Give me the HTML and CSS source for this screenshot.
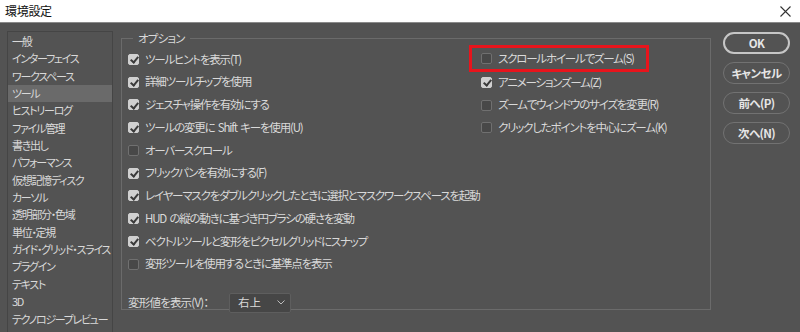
FILE: index.html
```html
<!DOCTYPE html>
<html lang="ja">
<head>
<meta charset="UTF-8">
<title>環境設定</title>
<link rel="stylesheet" href="styles.css">
</head>
<body>
<div class="titlebar">
  <span class="title">環境設定</span>
  <svg class="close" width="11" height="11" viewBox="0 0 11 11"><path d="M0.5 0.5L10.5 10.5M10.5 0.5L0.5 10.5" stroke="#333" stroke-width="1.1"/></svg>
</div>
<div class="dialog">
  <ul class="sidebar">
    <li>一般</li>
    <li>インターフェイス</li>
    <li>ワークスペース</li>
    <li class="active">ツール</li>
    <li>ヒストリーログ</li>
    <li>ファイル管理</li>
    <li>書き出し</li>
    <li>パフォーマンス</li>
    <li>仮想記憶ディスク</li>
    <li>カーソル</li>
    <li>透明部分・色域</li>
    <li>単位・定規</li>
    <li>ガイド・グリッド・スライス</li>
    <li>プラグイン</li>
    <li>テキスト</li>
    <li>3D</li>
    <li>テクノロジープレビュー</li>
  </ul>
  <fieldset class="options">
    <legend>オプション</legend>
    <div class="columns">
      <div class="col col-left">
        <label class="opt"><span class="box on"></span>ツールヒントを表示(T)</label>
        <label class="opt"><span class="box on"></span>詳細ツールチップを使用</label>
        <label class="opt"><span class="box on"></span>ジェスチャ操作を有効にする</label>
        <label class="opt"><span class="box on"></span>ツールの変更に Shift キーを使用(U)</label>
        <label class="opt"><span class="box"></span>オーバースクロール</label>
        <label class="opt"><span class="box on"></span>フリックパンを有効にする(F)</label>
        <label class="opt"><span class="box on"></span>レイヤーマスクをダブルクリックしたときに選択とマスクワークスペースを起動</label>
        <label class="opt"><span class="box on"></span>HUD の縦の動きに基づき円ブラシの硬さを変動</label>
        <label class="opt"><span class="box on"></span>ベクトルツールと変形をピクセルグリッドにスナップ</label>
        <label class="opt"><span class="box"></span>変形ツールを使用するときに基準点を表示</label>
      </div>
      <div class="col col-right">
        <label class="opt highlight"><span class="box"></span>スクロールホイールでズーム(S)</label>
        <label class="opt"><span class="box on"></span>アニメーションズーム(Z)</label>
        <label class="opt"><span class="box"></span>ズームでウィンドウのサイズを変更(R)</label>
        <label class="opt"><span class="box"></span>クリックしたポイントを中心にズーム(K)</label>
      </div>
    </div>
    <div class="transform-row">
      <span class="field-label">変形値を表示(V)：</span>
      <div class="select">
        <span>右上</span>
        <svg width="8" height="5" viewBox="0 0 8 5"><path d="M0.5 0.5L4 4L7.5 0.5" fill="none" stroke="#bdbdbd" stroke-width="1"/></svg>
      </div>
    </div>
  </fieldset>
  <div class="buttons">
    <button class="btn btn-default">OK</button>
    <button class="btn">キャンセル</button>
    <button class="btn">前へ(P)</button>
    <button class="btn">次へ(N)</button>
  </div>
</div>
</body>
</html>
```

FILE: styles.css
```css
*{margin:0;padding:0;box-sizing:border-box;}
:root{
  --bg:#535353;
  --text:#d9d9d9;
  --line:#6b6b6b;
  --dark-line:#454545;
  --select:#6a6a6a;
}
html,body{width:800px;height:332px;overflow:hidden;}
body{background:var(--bg);color:var(--text);font-family:"Noto Sans CJK JP","Noto Sans",sans-serif;font-size:11.5px;font-feature-settings:"palt";line-height:1;}
.titlebar{height:23px;background:#fff;border-bottom:1px solid #8a8a8a;display:flex;align-items:center;justify-content:space-between;padding:0 9px 0 5px;}
.title{color:#111;font-size:12px;letter-spacing:-.3px;}
.close{display:block;}
.dialog{display:flex;align-items:flex-start;padding-top:8px;}
.sidebar{list-style:none;margin-left:7px;width:106px;height:301px;border:1px solid var(--dark-line);border-bottom:none;padding-top:1px;flex-shrink:0;}
.sidebar li{height:17.35px;line-height:17.35px;padding-left:4px;white-space:nowrap;font-size:11px;letter-spacing:-1.3px;}
.sidebar li.active{background:var(--select);}
.options{margin-left:8px;width:590px;height:279px;border:1px solid var(--line);padding:0 0 0 6px;flex-shrink:0;}
.options legend{margin-left:5px;padding:0 5px;line-height:14px;letter-spacing:-.8px;}
.columns{display:flex;padding-top:3px;}
.col{display:flex;flex-direction:column;}
.col-left{width:355px;}
.col-right{margin-left:-2px;}
.opt{display:flex;align-items:center;height:22.75px;white-space:nowrap;letter-spacing:-1.2px;word-spacing:2px;}
.box{width:11px;height:11px;border:1px solid #707070;background:#484848;border-radius:2px;margin-right:6px;position:relative;flex-shrink:0;}
.box.on{background:#d0d0d0;border-color:#d0d0d0;}
.box.on::after{content:"";position:absolute;left:2.5px;top:.5px;width:3px;height:6px;border:solid #3a3a3a;border-width:0 2px 2px 0;transform:rotate(40deg);}
.highlight{border:3px solid #e8141c;height:27px;margin:-3px 0 -1px -12px;padding-left:9px;width:180px;}
.transform-row{display:flex;align-items:center;margin-top:17px;}
.field-label{width:101px;letter-spacing:-.8px;}
.select{width:62px;height:20px;background:#464646;border:1px solid #5e5e5e;border-radius:2px;display:flex;align-items:center;justify-content:space-between;padding:0 5px 0 8px;}
.buttons{display:flex;flex-direction:column;gap:8px;margin-left:12px;padding-top:1px;}
.btn{width:67px;height:22px;border-radius:11px;border:1px solid #727272;background:transparent;color:#e6e6e6;font-family:inherit;font-size:11.5px;font-weight:bold;font-feature-settings:"palt";letter-spacing:-.6px;}
.btn-default{border:2px solid #c6c6c6;}
```
